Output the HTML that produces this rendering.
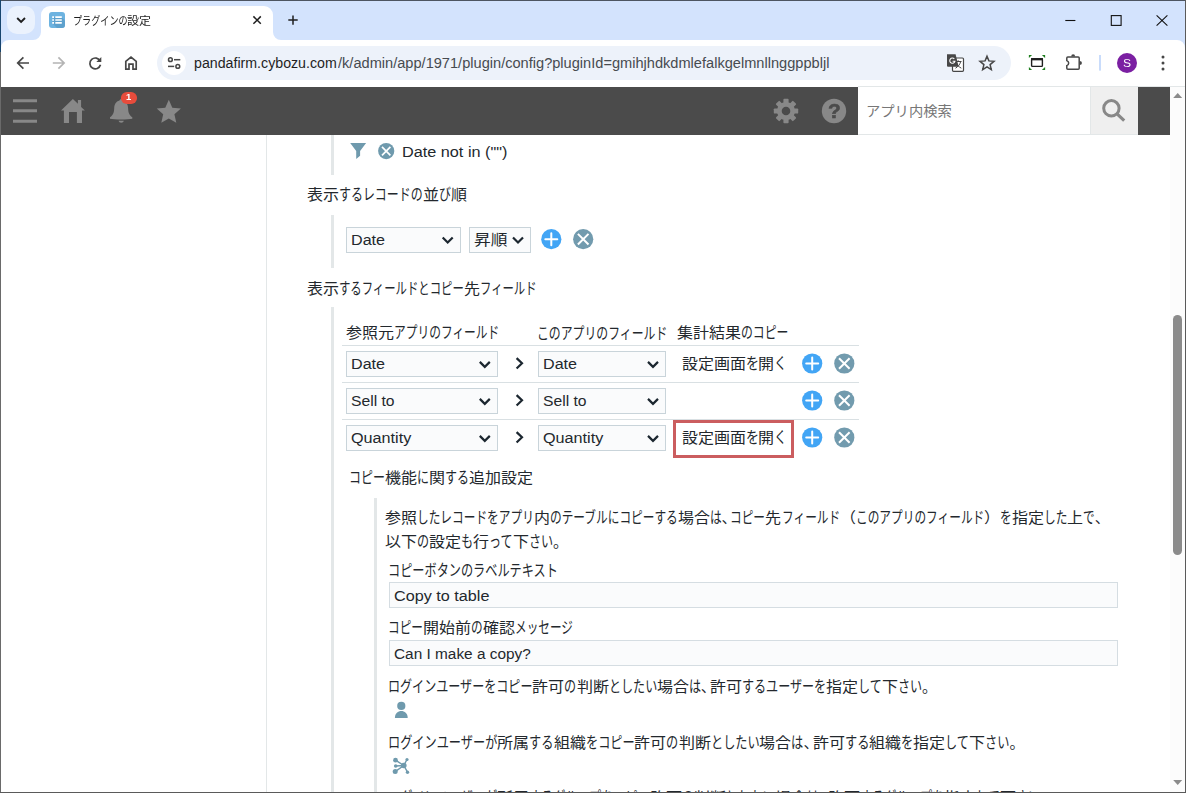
<!DOCTYPE html>
<html lang="ja">
<head>
<meta charset="utf-8">
<title>プラグインの設定</title>
<style>
html,body{margin:0;padding:0;}
body{width:1186px;height:793px;position:relative;overflow:hidden;background:#fff;
 font-family:"Liberation Sans","Noto Sans CJK JP",sans-serif;color:#222;}
.abs{position:absolute;}
.t{position:absolute;white-space:nowrap;transform-origin:0 50%;line-height:1;}
.t i{display:inline-block;font-style:normal;transform-origin:0 50%;}
svg{position:absolute;overflow:visible;}
/* ---- browser chrome ---- */
#frame{left:0;top:0;width:1186px;height:41px;background:#d3e3fd;}
#tabsearch{left:7px;top:6px;width:28px;height:28px;border-radius:10px;background:#ebf2fd;}
#tab{left:41px;top:6px;width:232px;height:35px;background:#fff;border-radius:9px 9px 0 0;}
#toolbar{left:0;top:40px;width:1186px;height:47px;background:#fff;}
#omni{left:157px;top:46px;width:854px;height:34px;border-radius:17px;background:#edf2fa;}
#siteinfo{left:162px;top:51px;width:24px;height:24px;border-radius:12px;background:#fff;}
/* ---- kintone header ---- */
#hdr{left:0;top:87px;width:1170px;height:48px;background:#4b4b4b;}
#srch{left:858px;top:86px;width:232px;height:49px;background:#fff;box-sizing:border-box;border-top:1px solid #e3e7e8;border-bottom:1px solid #e3e7e8;}
#srchbtn{left:1090px;top:86px;width:48px;height:49px;background:#efefef;border:1px solid #e3e7e8;border-right:0;box-sizing:border-box;}
/* ---- content ---- */
.bar{position:absolute;background:#e3e7e8;}
.sel{position:absolute;box-sizing:border-box;border:1px solid #c9d4da;background:#fafbfc;height:26px;}
.inp{position:absolute;box-sizing:border-box;border:1px solid #d5dde2;background:#fafbfc;height:26px;}
.hl{position:absolute;height:1px;background:#d9e0e3;left:342px;width:517px;}
</style>
</head>
<body>
<!-- browser chrome -->
<div id="frame" class="abs"></div>
<div id="tabsearch" class="abs"></div>
<div id="tab" class="abs"></div>
<div id="toolbar" class="abs"></div>
<div id="omni" class="abs"></div>
<div id="siteinfo" class="abs"></div>
<!-- tab shape curves -->
<svg style="left:0;top:0" width="1186" height="90">
  <path d="M33 41 V40 A8 8 0 0 0 41 32 V41 Z" fill="#fff"/>
  <path d="M281 41 V40 A8 8 0 0 1 273 32 V41 Z" fill="#fff"/>
  <!-- toolbar rounded top corners (frame colour showing) -->
  <path d="M0 40 H9 A8 8 0 0 0 1 48 H0 Z" fill="#d3e3fd"/>
  <path d="M1186 40 H1177 A8 8 0 0 1 1185 48 H1186 Z" fill="#d3e3fd"/>
  <!-- tab search chevron -->
  <path d="M17.2 18 L21.1 21.9 L25 18" fill="none" stroke="#1f1f1f" stroke-width="1.9"/>
  <!-- favicon -->
  <rect x="49" y="12" width="16" height="16" rx="3" fill="#6db3e0"/>
  <path d="M54 17 L61.5 17 L65 20.5 V25 A3 3 0 0 1 62 28 H57 L52 23 Z" fill="#5a9bc7" opacity=".75"/>
  <path d="M55.3 17.2 H61.8 M55.3 20 H61.8 M55.3 22.8 H61.8" stroke="#fff" stroke-width="1.7"/>
  <path d="M52.2 17.2 H54 M52.2 20 H54 M52.2 22.8 H54" stroke="#fff" stroke-width="1.7"/>
  <!-- tab close -->
  <path d="M253.4 16.4 L260.8 23.8 M260.8 16.4 L253.4 23.8" stroke="#1f1f1f" stroke-width="1.5"/>
  <!-- new tab -->
  <path d="M288.3 20.1 H297.7 M293 15.4 V24.8" stroke="#1f1f1f" stroke-width="1.5"/>
  <!-- window controls -->
  <path d="M1065.3 20.5 H1075.4" stroke="#111" stroke-width="1.1"/>
  <rect x="1111.3" y="15.6" width="9.8" height="9.8" fill="none" stroke="#111" stroke-width="1.1"/>
  <path d="M1156.6 15.3 L1167.4 25.6 M1167.4 15.3 L1156.6 25.6" stroke="#111" stroke-width="1.1"/>
  <!-- back -->
  <path d="M29 63 H18.2 M23.4 57.3 L17.7 63 L23.4 68.7" fill="none" stroke="#474747" stroke-width="1.7"/>
  <!-- forward (disabled) -->
  <path d="M52.8 63 H63.6 M58.4 57.3 L64.1 63 L58.4 68.7" fill="none" stroke="#b4b4b4" stroke-width="1.7"/>
  <!-- reload -->
  <path d="M100.2 61.2 A5.4 5.4 0 1 0 100.5 64.8" fill="none" stroke="#474747" stroke-width="1.7"/>
  <path d="M101.3 57 V62 H96.3 Z" fill="#474747"/>
  <!-- home -->
  <path d="M125.8 69.2 V61.3 L131 57.2 L136.2 61.3 V69.2 H133 V64.2 H129 V69.2 Z" fill="none" stroke="#474747" stroke-width="1.7" stroke-linejoin="miter"/>
  <!-- tune icon -->
  <g fill="none" stroke="#474747" stroke-width="1.5">
    <circle cx="170.4" cy="59.7" r="1.9"/><path d="M174 59.7 H180.3"/>
    <circle cx="177.8" cy="66.4" r="1.9"/><path d="M168 66.4 H174.2"/>
  </g>
  <!-- translate icon -->
  <rect x="952.5" y="58" width="11" height="13.3" rx="1" fill="#fff" stroke="#474747" stroke-width="1.2"/>
  <path d="M955 61.5 H961.5 M958.2 60.3 V61.5 M960.6 61.8 C960 64.5 958 66.8 955.5 68.2 M956.3 62.5 C957 64.8 958.8 66.8 961.3 68.2" fill="none" stroke="#474747" stroke-width="1"/>
  <path d="M947 54.2 H955.6 L958.6 66.8 H948 A1 1 0 0 1 947 65.8 Z" fill="#474747"/>
  <path d="M954.3 58.9 A2.6 2.6 0 1 0 954.9 61.3 H952.6" fill="none" stroke="#fff" stroke-width="1.1"/>
  <!-- bookmark star -->
  <path d="M987 56.2 L988.9 60.9 L994 61.3 L990.1 64.6 L991.3 69.6 L987 66.9 L982.7 69.6 L983.9 64.6 L980 61.3 L985.1 60.9 Z" fill="none" stroke="#474747" stroke-width="1.5" stroke-linejoin="miter"/>
  <!-- screenshot extension icon -->
  <rect x="1031.6" y="58.9" width="10.8" height="7.5" rx=".8" fill="#fff" stroke="#1f1f1f" stroke-width="1.4"/>
  <path d="M1031 59.2 H1043" stroke="#1f1f1f" stroke-width="2.3"/>
  <g fill="#1e7e1e">
    <path d="M1028.9 54.9 H1032.1 L1028.9 58.1 Z"/><path d="M1045.1 54.9 H1041.9 L1045.1 58.1 Z"/>
    <path d="M1028.9 70.1 H1032.1 L1028.9 66.9 Z"/><path d="M1045.1 70.1 H1041.9 L1045.1 66.9 Z"/>
  </g>
  <!-- puzzle -->
  <path d="M1067.8 56.9 H1078.2 A1 1 0 0 1 1079.2 57.9 V68.2 A1 1 0 0 1 1078.2 69.2 H1067.8 A1 1 0 0 1 1066.8 68.2 V65.6 A2.6 2.6 0 0 0 1066.8 60.6 V57.9 A1 1 0 0 1 1067.8 56.9 Z" fill="none" stroke="#474747" stroke-width="1.5"/>
  <path d="M1071.2 56.4 A1.95 2.1 0 0 1 1075.1 56.4 Z" fill="#474747"/>
  <path d="M1079.7 60.9 A2.2 2 0 0 1 1079.7 65 Z" fill="#474747"/>
  <!-- separator -->
  <rect x="1099" y="55" width="2" height="15.6" fill="#c9dcfb"/>
  <!-- avatar -->
  <circle cx="1127" cy="63" r="10" fill="#7b1fa2"/>
  <!-- menu dots -->
  <circle cx="1163" cy="57" r="1.5" fill="#474747"/><circle cx="1163" cy="63" r="1.5" fill="#474747"/><circle cx="1163" cy="69" r="1.5" fill="#474747"/>
</svg>

<!-- kintone header -->
<div id="hdr" class="abs"></div>
<div id="srch" class="abs"></div>
<div id="srchbtn" class="abs"></div>
<svg style="left:0;top:87px" width="1170" height="48" viewBox="0 87 1170 48">
  <!-- hamburger -->
  <path d="M13 100.7 H37 M13 110.8 H37 M13 121.2 H37" stroke="#888" stroke-width="3"/>
  <!-- home -->
  <path d="M72.9 99 L77.9 103.8 V100.1 H81.1 V106.9 L84.9 110.6 H82 V123 H76.9 V112.1 H69 V123 H63.9 V110.6 H61 Z" fill="#888"/>
  <!-- bell -->
  <path d="M121.1 99.2 C122.2 99.2 122.6 99.9 122.7 100.6 C126.5 101.6 127.9 104.6 128.1 108.2 C128.3 112.6 129.1 115 132.3 117.3 V118.7 C128 119.7 114.2 119.7 110 118.7 V117.3 C113.2 115 114 112.6 114.2 108.2 C114.4 104.6 115.8 101.6 119.5 100.6 C119.6 99.9 120 99.2 121.1 99.2 Z" fill="#888"/>
  <path d="M118.6 120.8 H123.8 C123.4 123.4 119 123.4 118.6 120.8 Z" fill="#888"/>
  <rect x="120.9" y="92" width="16.2" height="12.1" rx="6.05" fill="#e74c3c"/>
  <!-- star -->
  <path d="M168.8 99.8 L172.3 107.7 L180.9 108.6 L174.4 114.3 L176.3 122.8 L168.8 118.4 L161.3 122.8 L163.2 114.3 L156.7 108.6 L165.3 107.7 Z" fill="#888"/>
  <!-- gear -->
  <g transform="translate(786 111)" fill="#888">
    <circle r="9.1"/>
    <g id="tooth"><rect x="-2.6" y="-12.2" width="5.2" height="6" rx=".9"/></g>
    <rect x="-2.6" y="-12.2" width="5.2" height="6" rx=".9" transform="rotate(45)"/>
    <rect x="-2.6" y="-12.2" width="5.2" height="6" rx=".9" transform="rotate(90)"/>
    <rect x="-2.6" y="-12.2" width="5.2" height="6" rx=".9" transform="rotate(135)"/>
    <rect x="-2.6" y="-12.2" width="5.2" height="6" rx=".9" transform="rotate(180)"/>
    <rect x="-2.6" y="-12.2" width="5.2" height="6" rx=".9" transform="rotate(225)"/>
    <rect x="-2.6" y="-12.2" width="5.2" height="6" rx=".9" transform="rotate(270)"/>
    <rect x="-2.6" y="-12.2" width="5.2" height="6" rx=".9" transform="rotate(315)"/>
    <circle r="4.3" fill="#4b4b4b"/>
  </g>
  <!-- help -->
  <circle cx="834" cy="111" r="12.2" fill="#888"/>
</svg>
<svg style="left:1090px;top:87px" width="48" height="48" viewBox="1090 87 48 48">
  <circle cx="1111.4" cy="108.3" r="7.7" fill="none" stroke="#888" stroke-width="3"/>
  <path d="M1116.8 113.7 L1124.2 120.6" stroke="#888" stroke-width="3.2"/>
</svg>

<div class="bar" style="left:266px;top:135px;width:1px;height:657px;"></div>
<div class="bar" style="left:331px;top:135px;width:3px;height:39.5px;"></div>
<div class="bar" style="left:331px;top:215px;width:3px;height:52.7px;"></div>
<div class="bar" style="left:331px;top:307px;width:3px;height:485px;"></div>
<div class="bar" style="left:374px;top:498px;width:3px;height:294px;"></div>
<svg style="left:0;top:0" width="1186" height="793"><path d="M350.2 143 H366.1 L360.1 151 V155.7 L356.2 159.1 V151 Z" fill="#6f9aad"/></svg>
<svg style="left:0;top:0" width="1186" height="793"><circle cx="386.2" cy="151.1" r="8.1" fill="#6f9aad"/><path d="M382.0 146.9 L390.4 155.29999999999998 M390.4 146.9 L382.0 155.29999999999998" stroke="#fff" stroke-width="1.7" stroke-linecap="butt"/></svg>
<div class="sel" style="left:346px;top:227px;width:115px;"></div>
<div class="sel" style="left:469px;top:227px;width:62px;"></div>
<svg style="left:0;top:0" width="1186" height="793"><path d="M442.70 237.50 L447.70 242.50 L452.70 237.50" fill="none" stroke="#1c2730" stroke-width="2.2" stroke-linecap="butt" stroke-linejoin="miter"/></svg>
<svg style="left:0;top:0" width="1186" height="793"><path d="M513.00 237.50 L518.00 242.50 L523.00 237.50" fill="none" stroke="#1c2730" stroke-width="2.2" stroke-linecap="butt" stroke-linejoin="miter"/></svg>
<svg style="left:0;top:0" width="1186" height="793"><circle cx="551.3" cy="239.2" r="10.1" fill="#42a5f5"/><path d="M545.3 239.2 H557.3 M551.3 233.2 V245.2" stroke="#fff" stroke-width="2" stroke-linecap="round"/></svg>
<svg style="left:0;top:0" width="1186" height="793"><circle cx="583.2" cy="239.2" r="10.1" fill="#729bae"/><path d="M577.9000000000001 233.89999999999998 L588.5 244.5 M588.5 233.89999999999998 L577.9000000000001 244.5" stroke="#fff" stroke-width="2.0" stroke-linecap="butt"/></svg>
<div class="hl" style="top:345px;"></div>
<div class="hl" style="top:382px;"></div>
<div class="hl" style="top:419px;"></div>
<div class="sel" style="left:346px;top:351px;width:152px;"></div>
<div class="sel" style="left:538px;top:351px;width:128px;"></div>
<svg style="left:0;top:0" width="1186" height="793"><path d="M479.80 361.90 L484.80 366.90 L489.80 361.90" fill="none" stroke="#1c2730" stroke-width="2.2" stroke-linecap="butt" stroke-linejoin="miter"/></svg>
<svg style="left:0;top:0" width="1186" height="793"><path d="M648.00 361.90 L653.00 366.90 L658.00 361.90" fill="none" stroke="#1c2730" stroke-width="2.2" stroke-linecap="butt" stroke-linejoin="miter"/></svg>
<svg style="left:0;top:0" width="1186" height="793"><path d="M516.60 358.10 L522.00 363.30 L516.60 368.50" fill="none" stroke="#1c2730" stroke-width="2.2" stroke-linecap="butt" stroke-linejoin="miter"/></svg>
<svg style="left:0;top:0" width="1186" height="793"><circle cx="812.2" cy="363.5" r="10.1" fill="#42a5f5"/><path d="M806.2 363.5 H818.2 M812.2 357.5 V369.5" stroke="#fff" stroke-width="2" stroke-linecap="round"/></svg>
<svg style="left:0;top:0" width="1186" height="793"><circle cx="844.3" cy="363.5" r="10.1" fill="#729bae"/><path d="M839.0 358.2 L849.5999999999999 368.8 M849.5999999999999 358.2 L839.0 368.8" stroke="#fff" stroke-width="2.0" stroke-linecap="butt"/></svg>
<div class="sel" style="left:346px;top:388px;width:152px;"></div>
<div class="sel" style="left:538px;top:388px;width:128px;"></div>
<svg style="left:0;top:0" width="1186" height="793"><path d="M479.80 398.90 L484.80 403.90 L489.80 398.90" fill="none" stroke="#1c2730" stroke-width="2.2" stroke-linecap="butt" stroke-linejoin="miter"/></svg>
<svg style="left:0;top:0" width="1186" height="793"><path d="M648.00 398.90 L653.00 403.90 L658.00 398.90" fill="none" stroke="#1c2730" stroke-width="2.2" stroke-linecap="butt" stroke-linejoin="miter"/></svg>
<svg style="left:0;top:0" width="1186" height="793"><path d="M516.60 395.10 L522.00 400.30 L516.60 405.50" fill="none" stroke="#1c2730" stroke-width="2.2" stroke-linecap="butt" stroke-linejoin="miter"/></svg>
<svg style="left:0;top:0" width="1186" height="793"><circle cx="812.2" cy="400.5" r="10.1" fill="#42a5f5"/><path d="M806.2 400.5 H818.2 M812.2 394.5 V406.5" stroke="#fff" stroke-width="2" stroke-linecap="round"/></svg>
<svg style="left:0;top:0" width="1186" height="793"><circle cx="844.3" cy="400.5" r="10.1" fill="#729bae"/><path d="M839.0 395.2 L849.5999999999999 405.8 M849.5999999999999 395.2 L839.0 405.8" stroke="#fff" stroke-width="2.0" stroke-linecap="butt"/></svg>
<div class="sel" style="left:346px;top:425px;width:152px;"></div>
<div class="sel" style="left:538px;top:425px;width:128px;"></div>
<svg style="left:0;top:0" width="1186" height="793"><path d="M479.80 435.90 L484.80 440.90 L489.80 435.90" fill="none" stroke="#1c2730" stroke-width="2.2" stroke-linecap="butt" stroke-linejoin="miter"/></svg>
<svg style="left:0;top:0" width="1186" height="793"><path d="M648.00 435.90 L653.00 440.90 L658.00 435.90" fill="none" stroke="#1c2730" stroke-width="2.2" stroke-linecap="butt" stroke-linejoin="miter"/></svg>
<svg style="left:0;top:0" width="1186" height="793"><path d="M516.60 432.10 L522.00 437.30 L516.60 442.50" fill="none" stroke="#1c2730" stroke-width="2.2" stroke-linecap="butt" stroke-linejoin="miter"/></svg>
<svg style="left:0;top:0" width="1186" height="793"><circle cx="812.2" cy="437.5" r="10.1" fill="#42a5f5"/><path d="M806.2 437.5 H818.2 M812.2 431.5 V443.5" stroke="#fff" stroke-width="2" stroke-linecap="round"/></svg>
<svg style="left:0;top:0" width="1186" height="793"><circle cx="844.3" cy="437.5" r="10.1" fill="#729bae"/><path d="M839.0 432.2 L849.5999999999999 442.8 M849.5999999999999 432.2 L839.0 442.8" stroke="#fff" stroke-width="2.0" stroke-linecap="butt"/></svg>
<div class="abs" style="left:673px;top:420px;width:121px;height:38px;box-sizing:border-box;border:3px solid #cb5d5f;"></div>
<div class="inp" style="left:389px;top:582px;width:729px;"></div>
<div class="inp" style="left:389px;top:640px;width:729px;"></div>
<svg style="left:0;top:0" width="1186" height="793"><circle cx="401.3" cy="705.9" r="4.1" fill="#6f9aad"/><path d="M394.9 717.9 C394.9 708.8 407.7 708.8 407.7 717.9 Z" fill="#6f9aad"/></svg>
<svg style="left:0;top:0" width="1186" height="793"><g fill="#6f9aad"><path d="M403.8 765.5 L395.5 760.2 M403.8 765.5 L407 759.5 M403.8 765.5 L395.7 766 M403.8 765.5 L395.2 771.6 M403.8 765.5 L407.5 772.2" fill="none" stroke="#6f9aad" stroke-width="1.4"/><circle cx="403.8" cy="765.5" r="2.8"/><circle cx="395.5" cy="760.2" r="2.4"/><circle cx="407" cy="759.5" r="1.6"/><circle cx="395.7" cy="766" r="1.8"/><circle cx="395.2" cy="771.6" r="2.5"/><circle cx="407.5" cy="772.2" r="1.7"/></g></svg>
<span class="t" style="left:72.60px;top:16.10px;font-size:11px;color:#1f1f1f;opacity:.999;will-change:opacity;"><i style="margin-right:-11.32px;transform:scale(0.8285,1.07)">プラグインの</i><i style="margin-right:2.00px;transform:scaleX(1.0909)">設定</i></span>
<span class="t" style="left:193.99px;top:56.40px;font-size:14px;"><i style="color:#1f1f1f;margin-left:0.00px;margin-right:1.93px;transform:scaleX(1.0137)">pandafirm.cybozu.com</i><i style="color:#474b50;margin-left:0.94px;margin-right:20.11px;transform:scaleX(1.0427)">/k/admin/app/1971/plugin/config?pluginId=gmihjhdkdmlefalkgelmnllnggppbljl</i></span>
<span class="t" style="left:865.76px;top:103.50px;font-size:14px;color:#777;transform:scaleX(1.0210);">アプリ内検索</span>
<span class="t" style="left:125.75px;top:93.20px;font-size:9px;color:#fff;font-weight:700;transform:scaleX(1.0500);opacity:.999;will-change:opacity;">1</span>
<span class="t" style="left:1122.60px;top:58.30px;font-size:11px;color:#fff;transform:scaleX(1.1000);opacity:.999;will-change:opacity;">S</span>
<span class="t" style="left:827.96px;top:101.30px;font-size:20px;color:#4b4b4b;font-weight:700;transform:scaleX(1.0400);-webkit-text-stroke:0.6px #4b4b4b;opacity:.999;will-change:opacity;">?</span>
<span class="t" style="left:402.45px;top:143.60px;font-size:15.5px;color:#23282d;transform:scaleX(1.0475);">Date not in (&quot;&quot;)</span>
<span class="t" style="left:307.00px;top:186.90px;font-size:15px;color:#23282d;"><i style="margin-right:2.00px;transform:scaleX(1.0667)">表示</i><i style="margin-right:-21.35px;transform:scale(0.7967,1.07)">するレコードの</i><i style="margin-right:1.00px;transform:scaleX(1.0667)">並</i><i style="margin-right:-3.05px;transform:scale(0.7967,1.07)">び</i><i style="margin-right:1.00px;transform:scaleX(1.0667)">順</i></span>
<span class="t" style="left:350.76px;top:232.40px;font-size:15.5px;color:#23282d;transform:scaleX(1.0387);">Date</span>
<span class="t" style="left:473.79px;top:232.20px;font-size:15px;color:#23282d;transform:scaleX(1.1143);">昇順</span>
<span class="t" style="left:307.00px;top:280.70px;font-size:15px;color:#23282d;"><i style="margin-right:2.00px;transform:scaleX(1.0667)">表示</i><i style="margin-right:-40.01px;transform:scale(0.7575,1.07)">するフィールドとコピー</i><i style="margin-right:1.00px;transform:scaleX(1.0667)">先</i><i style="margin-right:-18.19px;transform:scale(0.7575,1.07)">フィールド</i></span>
<span class="t" style="left:346.20px;top:325.40px;font-size:15px;color:#23282d;"><i style="margin-right:3.00px;transform:scaleX(1.0667)">参照元</i><i style="margin-right:-29.50px;transform:scale(0.7815,1.07)">アプリのフィールド</i></span>
<span class="t" style="left:536.50px;top:325.90px;font-size:15px;color:#23282d;"><i style="margin-right:-34.50px;transform:scale(0.7909,1.07)">このアプリのフィールド</i></span>
<span class="t" style="left:677.00px;top:324.90px;font-size:15px;color:#23282d;"><i style="margin-right:4.00px;transform:scaleX(1.0667)">集計結果</i><i style="margin-right:-12.60px;transform:scale(0.7900,1.07)">のコピー</i></span>
<span class="t" style="left:350.76px;top:356.40px;font-size:15.5px;color:#23282d;transform:scaleX(1.0387);">Date</span>
<span class="t" style="left:542.76px;top:356.40px;font-size:15.5px;color:#23282d;transform:scaleX(1.0387);">Date</span>
<span class="t" style="left:351.09px;top:393.40px;font-size:15.5px;color:#23282d;transform:scaleX(1.0119);">Sell to</span>
<span class="t" style="left:543.09px;top:393.40px;font-size:15.5px;color:#23282d;transform:scaleX(1.0119);">Sell to</span>
<span class="t" style="left:351.06px;top:430.40px;font-size:15.5px;color:#23282d;transform:scaleX(1.0439);">Quantity</span>
<span class="t" style="left:543.06px;top:430.40px;font-size:15.5px;color:#23282d;transform:scaleX(1.0439);">Quantity</span>
<span class="t" style="left:681.50px;top:356.10px;font-size:15px;color:#23282d;"><i style="margin-right:4.00px;transform:scaleX(1.0667)">設定画面</i><i style="margin-right:-2.10px;transform:scale(0.8600,1.07)">を</i><i style="margin-right:1.00px;transform:scaleX(1.0667)">開</i><i style="margin-right:-2.10px;transform:scale(0.8600,1.07)">く</i></span>
<span class="t" style="left:681.50px;top:430.10px;font-size:15px;color:#23282d;"><i style="margin-right:4.00px;transform:scaleX(1.0667)">設定画面</i><i style="margin-right:-2.10px;transform:scale(0.8600,1.07)">を</i><i style="margin-right:1.00px;transform:scaleX(1.0667)">開</i><i style="margin-right:-2.10px;transform:scale(0.8600,1.07)">く</i></span>
<span class="t" style="left:348.70px;top:470.20px;font-size:15px;color:#23282d;"><i style="margin-right:-9.10px;transform:scale(0.7978,1.07)">コピー</i><i style="margin-right:2.00px;transform:scaleX(1.0667)">機能</i><i style="margin-right:-3.03px;transform:scale(0.7978,1.07)">に</i><i style="margin-right:1.00px;transform:scaleX(1.0667)">関</i><i style="margin-right:-6.07px;transform:scale(0.7978,1.07)">する</i><i style="margin-right:4.00px;transform:scaleX(1.0667)">追加設定</i></span>
<span class="t" style="left:385.20px;top:510.40px;font-size:15px;color:#23282d;"><i style="margin-right:2.00px;transform:scaleX(1.0667)">参照</i><i style="margin-right:-33.18px;transform:scale(0.7788,1.07)">したレコードをアプリ</i><i style="margin-right:1.00px;transform:scaleX(1.0667)">内</i><i style="margin-right:-36.50px;transform:scale(0.7788,1.07)">のテーブルにコピーする</i><i style="margin-right:2.00px;transform:scaleX(1.0667)">場合</i><i style="margin-right:-3.32px;transform:scale(0.7788,1.07)">は</i><i style="margin-right:-6.00px">、</i><i style="margin-right:-9.95px;transform:scale(0.7788,1.07)">コピー</i><i style="margin-right:1.00px;transform:scaleX(1.0667)">先</i><i style="margin-right:-16.59px;transform:scale(0.7788,1.07)">フィールド</i><i style="margin-right:1.00px;transform:scaleX(1.0667)">（</i><i style="margin-right:-36.50px;transform:scale(0.7788,1.07)">このアプリのフィールド</i><i style="margin-right:1.00px;transform:scaleX(1.0667)">）</i><i style="margin-right:-3.32px;transform:scale(0.7788,1.07)">を</i><i style="margin-right:2.00px;transform:scaleX(1.0667)">指定</i><i style="margin-right:-6.64px;transform:scale(0.7788,1.07)">した</i><i style="margin-right:1.00px;transform:scaleX(1.0667)">上</i><i style="margin-right:-3.32px;transform:scale(0.7788,1.07)">で</i><i style="margin-right:-6.00px">、</i></span>
<span class="t" style="left:385.20px;top:533.60px;font-size:15px;color:#23282d;"><i style="margin-right:2.00px;transform:scaleX(1.0667)">以下</i><i style="margin-right:-2.93px;transform:scale(0.8044,1.07)">の</i><i style="margin-right:2.00px;transform:scaleX(1.0667)">設定</i><i style="margin-right:-2.93px;transform:scale(0.8044,1.07)">も</i><i style="margin-right:1.00px;transform:scaleX(1.0667)">行</i><i style="margin-right:-5.87px;transform:scale(0.8044,1.07)">って</i><i style="margin-right:1.00px;transform:scaleX(1.0667)">下</i><i style="margin-right:-5.87px;transform:scale(0.8044,1.07)">さい</i><i style="margin-right:-6.00px">。</i></span>
<span class="t" style="left:388.10px;top:562.80px;font-size:15px;color:#23282d;"><i style="margin-right:-39.80px;transform:scale(0.8105,1.07)">コピーボタンのラベルテキスト</i></span>
<span class="t" style="left:393.76px;top:587.70px;font-size:15.5px;color:#23282d;transform:scaleX(1.0444);">Copy to table</span>
<span class="t" style="left:388.10px;top:620.00px;font-size:15px;color:#23282d;"><i style="margin-right:-10.10px;transform:scale(0.7756,1.07)">コピー</i><i style="margin-right:3.00px;transform:scaleX(1.0667)">開始前</i><i style="margin-right:-3.37px;transform:scale(0.7756,1.07)">の</i><i style="margin-right:2.00px;transform:scaleX(1.0667)">確認</i><i style="margin-right:-16.83px;transform:scale(0.7756,1.07)">メッセージ</i></span>
<span class="t" style="left:393.81px;top:645.60px;font-size:15.5px;color:#23282d;transform:scaleX(0.9919);">Can I make a copy?</span>
<span class="t" style="left:388.00px;top:678.50px;font-size:15px;color:#23282d;"><i style="margin-right:-35.30px;transform:scale(0.8039,1.07)">ログインユーザーをコピー</i><i style="margin-right:2.00px;transform:scaleX(1.0667)">許可</i><i style="margin-right:-2.94px;transform:scale(0.8039,1.07)">の</i><i style="margin-right:2.00px;transform:scaleX(1.0667)">判断</i><i style="margin-right:-11.77px;transform:scale(0.8039,1.07)">としたい</i><i style="margin-right:2.00px;transform:scaleX(1.0667)">場合</i><i style="margin-right:-2.94px;transform:scale(0.8039,1.07)">は</i><i style="margin-right:-6.00px">、</i><i style="margin-right:2.00px;transform:scaleX(1.0667)">許可</i><i style="margin-right:-20.59px;transform:scale(0.8039,1.07)">するユーザーを</i><i style="margin-right:2.00px;transform:scaleX(1.0667)">指定</i><i style="margin-right:-5.88px;transform:scale(0.8039,1.07)">して</i><i style="margin-right:1.00px;transform:scaleX(1.0667)">下</i><i style="margin-right:-5.88px;transform:scale(0.8039,1.07)">さい</i><i style="margin-right:-6.00px">。</i></span>
<span class="t" style="left:388.00px;top:734.50px;font-size:15px;color:#23282d;"><i style="margin-right:-25.46px;transform:scale(0.8114,1.07)">ログインユーザーが</i><i style="margin-right:2.00px;transform:scaleX(1.0667)">所属</i><i style="margin-right:-5.66px;transform:scale(0.8114,1.07)">する</i><i style="margin-right:2.00px;transform:scaleX(1.0667)">組織</i><i style="margin-right:-11.31px;transform:scale(0.8114,1.07)">をコピー</i><i style="margin-right:2.00px;transform:scaleX(1.0667)">許可</i><i style="margin-right:-2.83px;transform:scale(0.8114,1.07)">の</i><i style="margin-right:2.00px;transform:scaleX(1.0667)">判断</i><i style="margin-right:-11.31px;transform:scale(0.8114,1.07)">としたい</i><i style="margin-right:2.00px;transform:scaleX(1.0667)">場合</i><i style="margin-right:-2.83px;transform:scale(0.8114,1.07)">は</i><i style="margin-right:-6.00px">、</i><i style="margin-right:2.00px;transform:scaleX(1.0667)">許可</i><i style="margin-right:-5.66px;transform:scale(0.8114,1.07)">する</i><i style="margin-right:2.00px;transform:scaleX(1.0667)">組織</i><i style="margin-right:-2.83px;transform:scale(0.8114,1.07)">を</i><i style="margin-right:2.00px;transform:scaleX(1.0667)">指定</i><i style="margin-right:-5.66px;transform:scale(0.8114,1.07)">して</i><i style="margin-right:1.00px;transform:scaleX(1.0667)">下</i><i style="margin-right:-5.66px;transform:scale(0.8114,1.07)">さい</i><i style="margin-right:-6.00px">。</i></span>
<span class="t" style="left:388.00px;top:790.40px;font-size:15px;color:#23282d;"><i style="margin-right:-25.65px;transform:scale(0.8100,1.07)">ログインユーザーが</i><i style="margin-right:2.00px;transform:scaleX(1.0667)">所属</i><i style="margin-right:-28.50px;transform:scale(0.8100,1.07)">するグループをコピー</i><i style="margin-right:2.00px;transform:scaleX(1.0667)">許可</i><i style="margin-right:-2.85px;transform:scale(0.8100,1.07)">の</i><i style="margin-right:2.00px;transform:scaleX(1.0667)">判断</i><i style="margin-right:-11.40px;transform:scale(0.8100,1.07)">としたい</i><i style="margin-right:2.00px;transform:scaleX(1.0667)">場合</i><i style="margin-right:-2.85px;transform:scale(0.8100,1.07)">は</i><i style="margin-right:-6.00px">、</i><i style="margin-right:2.00px;transform:scaleX(1.0667)">許可</i><i style="margin-right:-19.95px;transform:scale(0.8100,1.07)">するグループを</i><i style="margin-right:2.00px;transform:scaleX(1.0667)">指定</i><i style="margin-right:-5.70px;transform:scale(0.8100,1.07)">して</i><i style="margin-right:1.00px;transform:scaleX(1.0667)">下</i><i style="margin-right:-5.70px;transform:scale(0.8100,1.07)">さい</i><i style="margin-right:-6.00px">。</i></span>
<!-- window borders + scrollbar -->
<div class="abs" style="left:858px;top:86px;width:327px;height:1px;background:#e3e7e8;"></div>
<div class="abs" style="left:1170px;top:87px;width:15px;height:705px;background:#fcfcfc;"></div>
<div class="abs" style="left:1173px;top:315px;width:9px;height:240px;border-radius:4.5px;background:#8b8b8b;"></div>
<svg style="left:1170px;top:87px" width="15" height="705"><path d="M3.2 11 L7.7 6 L12.2 11 Z" fill="#8b8b8b"/><path d="M3.2 693 L12.2 693 L7.7 698 Z" fill="#8b8b8b"/></svg>
<div class="abs" style="left:0;top:0;width:1186px;height:1px;background:#4d5561;"></div>
<div class="abs" style="left:0;top:0;width:1px;height:793px;background:#6a6a6a;"></div>
<div class="abs" style="left:0;top:0;width:1px;height:52px;background:#17456e;"></div>
<div class="abs" style="left:1185px;top:0;width:1px;height:793px;background:#5a5a5a;"></div>
<div class="abs" style="left:0;top:792px;width:1186px;height:1px;background:#5a5a5a;"></div>
</body>
</html>
